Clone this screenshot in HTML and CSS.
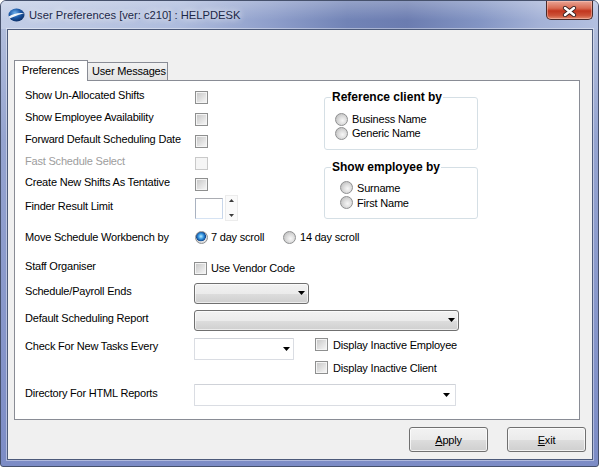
FILE: index.html
```html
<!DOCTYPE html>
<html>
<head>
  <meta charset="UTF-8">
  <title>User Preferences</title>
  <link rel="stylesheet" href="styles.css">
</head>
<body>
  <div class="window">
    <div class="titlebar">
      <svg class="app-icon" width="17" height="14" viewBox="0 0 17 14">
        <defs>
          <radialGradient id="orb" cx="40%" cy="35%" r="70%">
            <stop offset="0" stop-color="#6fb0ec"/>
            <stop offset="0.5" stop-color="#1d5aa8"/>
            <stop offset="1" stop-color="#0a2a60"/>
          </radialGradient>
        </defs>
        <ellipse cx="8.5" cy="7" rx="8" ry="6.5" fill="url(#orb)"/>
        <path d="M0.8 8.6 Q7 4.2 16.4 5.2 Q9 6.6 1.6 10.6 Z" fill="#ffffff" opacity="0.92"/>
      </svg>
      <span class="title">User Preferences [ver: c210] : HELPDESK</span>
      <div class="close-btn">
        <svg width="15" height="11" viewBox="0 0 15 11">
          <path d="M3 2 L12 9 M12 2 L3 9" stroke="#3a2424" stroke-width="4.2" stroke-linecap="round"/>
          <path d="M3 2 L12 9 M12 2 L3 9" stroke="#ffffff" stroke-width="2.4" stroke-linecap="round"/>
        </svg>
      </div>
    </div>

    <div class="client">
      <div class="tabs">
        <div class="tab active">Preferences</div>
        <div class="tab">User Messages</div>
      </div>

      <div class="panel">
        <div class="top-grid">
          <div class="rows">
            <div class="row"><span class="lbl">Show Un-Allocated Shifts</span><span class="chk"></span></div>
            <div class="row"><span class="lbl">Show Employee Availability</span><span class="chk"></span></div>
            <div class="row"><span class="lbl">Forward Default Scheduling Date</span><span class="chk"></span></div>
            <div class="row"><span class="lbl disabled">Fast Schedule Select</span><span class="chk off"></span></div>
            <div class="row short"><span class="lbl">Create New Shifts As Tentative</span><span class="chk"></span></div>
            <div class="row finder">
              <span class="lbl">Finder Result Limit</span>
              <span class="num-box"></span>
              <span class="spin">
                <svg width="13" height="26" viewBox="0 0 13 26">
                  <polygon points="4,7 9,7 6.5,4" fill="#3c3c3c"/>
                  <polygon points="4,19 9,19 6.5,22" fill="#3c3c3c"/>
                </svg>
              </span>
            </div>
          </div>

          <div class="groups">
            <fieldset class="group first">
              <legend>Reference client by</legend>
              <div class="opt"><span class="radio"></span>Business Name</div>
              <div class="opt"><span class="radio"></span>Generic Name</div>
            </fieldset>
            <fieldset class="group second">
              <legend>Show employee by</legend>
              <div class="opt"><span class="radio"></span>Surname</div>
              <div class="opt"><span class="radio"></span>First Name</div>
            </fieldset>
          </div>

          <div class="row scroll-row">
            <span class="lbl">Move Schedule Workbench by</span>
            <span class="scroll-opt first"><span class="radio on"></span>7 day scroll</span>
            <span class="scroll-opt"><span class="radio"></span>14 day scroll</span>
          </div>
        </div>

        <div class="lower">
          <div class="row staff">
            <span class="lbl">Staff Organiser</span>
            <span class="chk-line"><span class="chk"></span>Use Vendor Code</span>
          </div>
          <div class="row payroll">
            <span class="lbl">Schedule/Payroll Ends</span>
            <span class="combo w-payroll"><svg width="7" height="4"><polygon points="0,0 7,0 3.5,4" fill="#000"/></svg></span>
          </div>
          <div class="row report">
            <span class="lbl">Default Scheduling Report</span>
            <span class="combo w-report"><svg width="7" height="4"><polygon points="0,0 7,0 3.5,4" fill="#000"/></svg></span>
          </div>
          <div class="row check-block">
            <span class="lbl">Check For New Tasks Every</span>
            <span class="combo edit w-tasks"><svg width="7" height="4"><polygon points="0,0 7,0 3.5,4" fill="#000"/></svg></span>
            <div class="side-checks">
              <span class="chk-line"><span class="chk"></span>Display Inactive Employee</span>
              <span class="chk-line"><span class="chk"></span>Display Inactive Client</span>
            </div>
          </div>
          <div class="row directory">
            <span class="lbl">Directory For HTML Reports</span>
            <span class="combo edit w-dir"><svg width="7" height="4"><polygon points="0,0 7,0 3.5,4" fill="#000"/></svg></span>
          </div>
        </div>
      </div>

      <div class="buttons">
        <button class="btn"><u>A</u>pply</button>
        <button class="btn"><u>E</u>xit</button>
      </div>
    </div>
  </div>
</body>
</html>
```

FILE: styles.css
```css
/* Окно настроек в стиле Windows 7 */
* {
  box-sizing: border-box;
}

body {
  margin: 0;
  background: #fff;
  font-family: "Liberation Sans", Arial, sans-serif;
  font-size: 11px;
  letter-spacing: -0.2px;
  color: #000;
}

.window {
  width: 599px;
  height: 467px;
  border: 1px solid #46516c;
  border-radius: 6px 6px 3px 3px;
  background: linear-gradient(to bottom, #b7c3df 0%, #95a4d0 30%, #7c8cc6 100%);
  display: flex;
  flex-direction: column;
  overflow: hidden;
}

/* Заголовок */
.titlebar {
  height: 28px;
  display: flex;
  align-items: flex-start;
  background:
    linear-gradient(rgba(255, 255, 255, 0.25), rgba(255, 255, 255, 0) 70%),
    linear-gradient(to right, #c2cde6 0%, #bac6e2 15%, #aebcdd 30%, #8f9fcb 45%, #7183b6 58%, #6b7cb0 68%, #8294c3 80%, #a3b1d6 90%, #b3c0e0 100%);
}

.app-icon {
  margin: 7px 0 0 7px;
}

.title {
  margin: 7px 0 0 4px;
  font-size: 11.2px;
  letter-spacing: 0;
  line-height: 14px;
  color: #1c2848;
  text-shadow: 0 0 6px rgba(255, 255, 255, 0.9), 0 0 10px rgba(255, 255, 255, 0.6);
}

.close-btn {
  margin-left: auto;
  margin-right: 5px;
  width: 47px;
  height: 19px;
  border: 1px solid #4a2a28;
  border-top: none;
  border-radius: 0 0 5px 5px;
  background: linear-gradient(#e9a596 0%, #d86a52 40%, #c2361f 55%, #cc5238 80%, #e38a6e 100%);
  box-shadow: inset 0 0 0 1px rgba(255, 210, 200, 0.45);
  display: flex;
  align-items: center;
  justify-content: center;
  padding-top: 2px;
}

/* Клиентская область */
.client {
  margin: 0 5px 0 6px;
  height: 431px;
  background: #f0f0f0;
  border: 1px solid #4c5a7a;
  box-shadow: 0 0 0 1px rgba(255, 255, 255, 0.4);
}

.tabs {
  display: flex;
  align-items: flex-end;
  height: 20px;
  margin-top: 30px;
  padding-left: 6px;
}

.tab {
  width: 81px;
  height: 18px;
  margin-left: -1px;
  padding-left: 4px;
  line-height: 17px;
  white-space: nowrap;
  border: 1px solid #898c95;
  border-bottom: none;
  background: linear-gradient(#f2f2f2, #e3e3e3);
}

.tab.active {
  position: relative;
  z-index: 1;
  width: 74px;
  height: 21px;
  margin-left: 0;
  margin-bottom: -1px;
  padding-left: 7px;
  line-height: 18px;
  background: #fff;
}

.panel {
  width: 566px;
  height: 340px;
  margin-left: 6px;
  padding: 5px 0 0 10px;
  background: #fff;
  border: 1px solid #898c95;
}

.top-grid {
  display: grid;
  grid-template-columns: 299px 1fr;
}

.row {
  display: flex;
  align-items: center;
  height: 22px;
}

.row.short {
  height: 21px;
}

.lbl {
  width: 170px;
  flex: none;
  line-height: 13px;
  padding-bottom: 4px;
  white-space: nowrap;
}

.lbl.disabled {
  color: #9d9d9d;
}

/* Флажки и переключатели */
.chk {
  width: 13px;
  height: 13px;
  flex: none;
  padding: 1px;
  border: 1px solid #8e8f8f;
  background: linear-gradient(135deg, #c9c9c9, #f4f4f4) content-box, #f4f4f4;
}

.chk.off {
  border-color: #c9c9c9;
  background: #f5f5f5;
}

.radio {
  width: 13px;
  height: 13px;
  flex: none;
  border-radius: 50%;
  border: 1px solid #8f9091;
  background: radial-gradient(circle at 60% 60%, #f7f7f7 0, #dedede 40%, #c2c2c2 80%);
}

.radio.on {
  background:
    radial-gradient(circle at 45% 40%, #b8ecff 0, #3c9be4 28%, #104a94 52%, rgba(16, 74, 148, 0) 58%),
    radial-gradient(circle at 60% 60%, #f7f7f7 0, #dedede 40%, #c2c2c2 80%);
}

.finder {
  height: 26px;
}

.num-box {
  width: 28px;
  height: 21px;
  border: 1px solid;
  border-color: #abadb3 #c7d6ea #d6e3f3 #a9b2c0;
  background: #fff;
}

.spin {
  width: 13px;
  height: 26px;
  margin-left: 2px;
  border: 1px solid #ececec;
  background: #fafafa;
}

.spin svg {
  display: block;
  margin: -1px;
}

/* Группы справа */
.groups {
  grid-column: 2;
  grid-row: 1;
  align-self: start;
  padding-top: 4px;
}

.group {
  width: 154px;
  margin: 0;
  padding: 8px 0 9px 6px;
  border: 1px solid #d5dfe5;
  border-radius: 3px;
  min-inline-size: 0;
}

.group legend {
  padding: 0 1px;
  font-size: 12px;
  font-weight: bold;
  letter-spacing: 0;
  line-height: 14px;
}

.group.second {
  margin-top: 10px;
  padding: 6px 0 8px 6px;
}

.opt {
  display: flex;
  align-items: center;
  height: 14px;
  gap: 4px;
  padding-left: 4px;
}

.group.second .opt {
  height: 15px;
  padding-left: 9px;
}

.scroll-row {
  grid-column: 1 / span 2;
  margin-top: 5px;
}

.scroll-row .lbl {
  padding-bottom: 0;
}

.scroll-opt {
  display: flex;
  align-items: center;
  gap: 3px;
}

.scroll-opt.first {
  width: 88px;
}

.scroll-opt + .scroll-opt {
  gap: 4px;
}

/* Нижняя часть */
.lower .lbl {
  width: 169px;
}

.chk-line {
  display: flex;
  align-items: center;
  height: 13px;
  gap: 4px;
  white-space: nowrap;
}

.staff {
  margin-top: 9px;
}

.payroll {
  margin-top: 3px;
}

.report {
  margin-top: 5px;
}

.combo {
  height: 21px;
  display: flex;
  align-items: center;
  justify-content: flex-end;
  padding-right: 3px;
  border: 1px solid #707070;
  border-radius: 3px;
  background: linear-gradient(#f2f2f2 0%, #ebebeb 50%, #dddddd 51%, #cfcfcf 100%);
  box-shadow: inset 0 0 0 1px rgba(255, 255, 255, 0.6);
}

.combo.edit {
  height: 22px;
  border-radius: 1px;
  border-color: #dadde3;
  border-top-color: #cfd2d8;
  background: #fff;
  box-shadow: none;
}

.w-payroll {
  width: 115px;
}

.w-report {
  width: 265px;
}

.w-tasks {
  width: 100px;
}

.w-dir {
  width: 262px;
  padding-right: 5px;
}

.check-block {
  height: 36px;
  margin-top: 7px;
  align-items: flex-start;
}

.check-block .lbl {
  padding: 2px 0 0;
}

.side-checks {
  display: flex;
  flex-direction: column;
  gap: 10px;
  margin-left: 21px;
}

.side-checks .chk-line {
  gap: 5px;
}

.directory {
  margin-top: 10px;
}

/* Кнопки */
.buttons {
  display: flex;
  justify-content: flex-end;
  gap: 19px;
  margin-top: 7px;
  padding-right: 6px;
}

.btn {
  width: 79px;
  height: 25px;
  padding: 0;
  font-family: inherit;
  font-size: 11px;
  letter-spacing: -0.2px;
  color: #000;
  border: 1px solid #707070;
  border-radius: 3px;
  background: linear-gradient(#f2f2f2 0%, #ebebeb 50%, #dddddd 51%, #cfcfcf 100%);
  box-shadow: inset 0 0 0 1px rgba(255, 255, 255, 0.7);
}
```
